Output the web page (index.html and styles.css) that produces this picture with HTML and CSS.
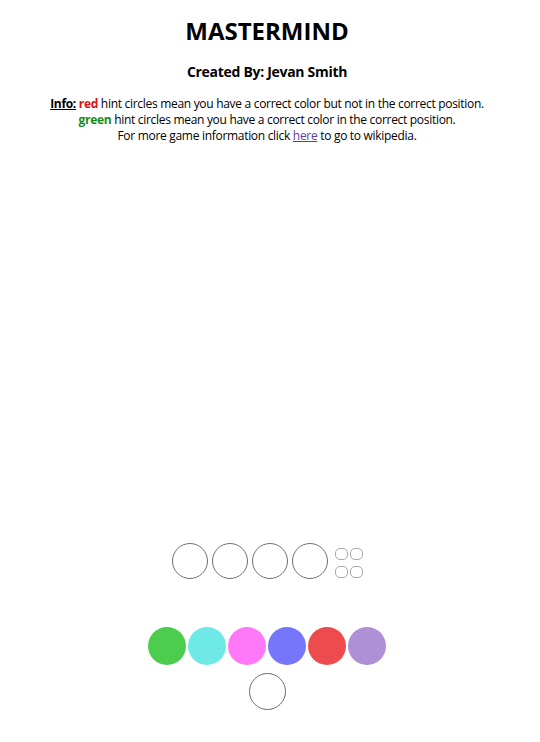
FILE: index.html
```html
<!DOCTYPE html>
<html lang="en">
<head>
<meta charset="utf-8">
<title>Mastermind</title>
<link rel="stylesheet" href="styles.css">
</head>
<body>
<div class="page">
  <header class="intro">
    <h1 class="title">MASTERMIND</h1>
    <h3 class="byline">Created By: Jevan Smith</h3>
    <p class="info">
      <span class="info-label">Info:</span> <span class="red">red</span> hint circles mean you have a correct color but not in the correct position.<br>
      <span class="green">green</span> hint circles mean you have a correct color in the correct position.<br>
      For more game information click <a class="link" href="#">here</a> to go to wikipedia.
    </p>
  </header>
  <main class="board">
    <div class="guess-row">
      <div class="slot"></div>
      <div class="slot"></div>
      <div class="slot"></div>
      <div class="slot"></div>
      <div class="hints">
        <div class="hint"></div>
        <div class="hint"></div>
        <div class="hint"></div>
        <div class="hint"></div>
      </div>
    </div>
  </main>
  <section class="palette">
    <div class="colors">
      <div class="peg c-green"></div>
      <div class="peg c-cyan"></div>
      <div class="peg c-pink"></div>
      <div class="peg c-blue"></div>
      <div class="peg c-red"></div>
      <div class="peg c-purple"></div>
    </div>
    <div class="selected"></div>
  </section>
</div>
</body>
</html>
```

FILE: styles.css
```css
html, body {
  margin: 0;
  padding: 0;
  background: #ffffff;
}

body {
  font-family: "Open Sans", "Noto Sans", sans-serif;
  color: #000;
}

.page {
  width: 518px;
  margin-left: 8px;
  padding-top: 1px;
  text-align: center;
}

.title {
  font-size: 24px;
  font-weight: 700;
  margin: 14px 0 0;
  line-height: 32px;
}

.byline {
  font-size: 14px;
  font-weight: 700;
  letter-spacing: -0.3px;
  margin: 15px 0 0;
  line-height: 20px;
}

.info {
  font-size: 12px;
  letter-spacing: -0.3px;
  line-height: 16px;
  margin: 14px 0 0;
}

.info-label {
  font-weight: 700;
  text-decoration: underline;
}

.red {
  color: #e01010;
  font-weight: 700;
}

.green {
  color: #1a8a1a;
  font-weight: 700;
}

.link {
  color: #5b3ea6;
  text-decoration: underline;
}

.board {
  height: 435px;
  display: flex;
  flex-direction: column;
  justify-content: flex-end;
  align-items: center;
}

.guess-row {
  display: flex;
  align-items: center;
  gap: 4px;
}

.slot {
  width: 36px;
  height: 36px;
  box-sizing: border-box;
  border: 1.5px solid #6e6e6e;
  border-radius: 50%;
}

.hints {
  margin-left: 3px;
  margin-top: 4px;
  display: grid;
  grid-template-columns: 13px 13px;
  grid-auto-rows: 12px;
  column-gap: 2px;
  row-gap: 6px;
}

.hint {
  box-sizing: border-box;
  border: 1px solid #a8a8a8;
  border-radius: 5px;
}

.palette {
  margin-top: 48px;
  display: flex;
  flex-direction: column;
  align-items: center;
  gap: 8px;
}

.colors {
  display: flex;
  gap: 2px;
}

.peg {
  width: 38px;
  height: 38px;
  border-radius: 50%;
}

.c-green { background: #4ccd4e; }
.c-cyan { background: #6fe9e6; }
.c-pink { background: #ff78f7; }
.c-blue { background: #7676fa; }
.c-red { background: #ee4b4e; }
.c-purple { background: #af8fd6; }

.selected {
  width: 37px;
  height: 37px;
  box-sizing: border-box;
  border: 1.5px solid #6e6e6e;
  border-radius: 50%;
}
```
